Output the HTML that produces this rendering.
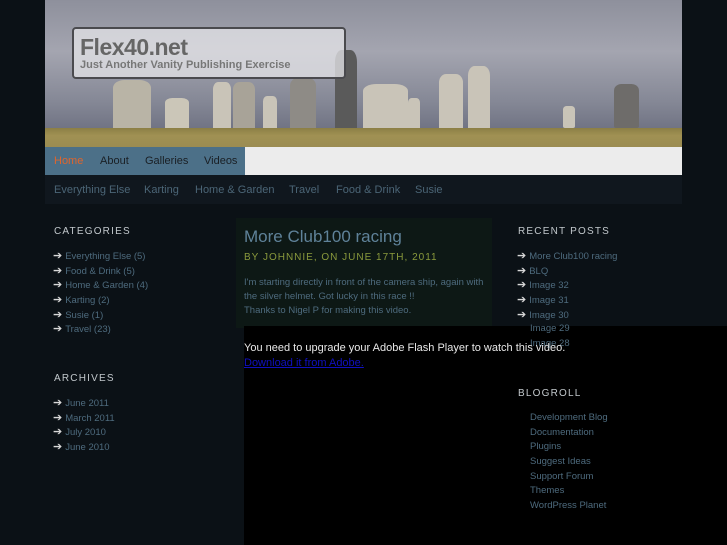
<!DOCTYPE html>
<html><head><style>
*{margin:0;padding:0;box-sizing:border-box}
body{width:727px;height:545px;overflow:hidden;background:#0b1116;font-family:"Liberation Sans",sans-serif;position:relative}
.hdr{position:absolute;left:45px;top:0;width:637px;height:147px;background:linear-gradient(180deg,#8e909c 0%,#a4a5b0 35%,#848795 70%,#717484 87%);overflow:hidden}
.gr{position:absolute;left:0;top:128px;width:637px;height:19px;background:linear-gradient(180deg,#8c7f45,#a09153 40%,#9b8c52)}
.st{position:absolute;background:#c9c4b8;border-radius:30% 30% 2px 2px/15% 15% 2px 2px}
.logo{position:absolute;left:72px;top:27px;width:274px;height:52px;background:rgba(225,225,230,.78);border:2px solid #4a4a4e;border-radius:4px}
.logo h1{position:absolute;left:6px;top:5px;font-size:23px;color:#666;font-weight:bold;letter-spacing:-.5px}
.logo p{position:absolute;left:6px;top:30px;font-size:11px;font-weight:bold;color:#777;letter-spacing:0}
.nav{position:absolute;left:45px;top:147px;width:637px;height:28px;background:#ececec}
.nav .b{position:absolute;left:0;top:0;width:200px;height:28px;background:#4c7088}
.nav span{position:absolute;top:8px;font-size:11px;color:#1a1f24}
.sub{position:absolute;left:45px;top:175px;width:637px;height:29px;background:#10171e}
.sub span{position:absolute;top:9px;font-size:11px;color:#4b6576}
h3{position:absolute;font-size:10px;font-weight:normal;color:#c2c8cc;letter-spacing:1.2px}
ul{position:absolute;list-style:none}
li{font-size:9.5px;color:#4e6b7e;height:14.7px;line-height:14.7px}
li.a:before{content:"➔";color:#d8d8d8;font-size:11px;margin-right:3px;margin-left:-13px}
.post{position:absolute;left:236px;top:218px;width:256px;height:110px;background:#0d1815}
.flash{position:absolute;left:244px;top:326px;width:483px;height:219px;background:#000}
</style></head><body>
<div class="hdr">
<div class="st" style="left:68px;top:80px;width:38px;height:52px;background:#b9b4a6"></div>
<div class="st" style="left:120px;top:98px;width:24px;height:32px;background:#cbc6b8"></div>
<div class="st" style="left:168px;top:82px;width:18px;height:48px"></div>
<div class="st" style="left:188px;top:82px;width:22px;height:48px;background:#a8a398"></div>
<div class="st" style="left:218px;top:96px;width:14px;height:34px"></div>
<div class="st" style="left:245px;top:78px;width:26px;height:52px;background:#8e8b86"></div>
<div class="st" style="left:290px;top:50px;width:22px;height:80px;background:#5a5a5a"></div>
<div class="st" style="left:318px;top:84px;width:45px;height:46px"></div>
<div class="st" style="left:363px;top:98px;width:12px;height:32px"></div>
<div class="st" style="left:394px;top:74px;width:24px;height:56px"></div>
<div class="st" style="left:423px;top:66px;width:22px;height:64px"></div>
<div class="st" style="left:518px;top:106px;width:12px;height:22px"></div>
<div class="st" style="left:569px;top:84px;width:25px;height:44px;background:#6e6c6a"></div>
<div class="gr"></div>
</div>
<div class="logo"><h1>Flex40.net</h1><p>Just Another Vanity Publishing Exercise</p></div>
<div class="nav"><div class="b"></div>
<span style="left:9px;color:#e0652c">Home</span><span style="left:55px">About</span><span style="left:100px">Galleries</span><span style="left:159px">Videos</span></div>
<div class="sub">
<span style="left:9px">Everything Else</span><span style="left:99px">Karting</span><span style="left:150px">Home &amp; Garden</span><span style="left:244px">Travel</span><span style="left:291px">Food &amp; Drink</span><span style="left:370px">Susie</span></div>
<h3 style="left:54px;top:226px">CATEGORIES</h3>
<ul style="left:66px;top:249px"><li class="a">Everything Else (5)</li><li class="a">Food &amp; Drink (5)</li><li class="a">Home &amp; Garden (4)</li><li class="a">Karting (2)</li><li class="a">Susie (1)</li><li class="a">Travel (23)</li></ul>
<h3 style="left:54px;top:373px">ARCHIVES</h3>
<ul style="left:66px;top:396px"><li class="a">June 2011</li><li class="a">March 2011</li><li class="a">July 2010</li><li class="a">June 2010</li></ul>
<div class="post"></div>
<div style="position:absolute;left:244px;top:227px;font-size:17px;color:#5f8299">More Club100 racing</div>
<div style="position:absolute;left:244px;top:252px;font-size:10px;color:#8a9a3c;letter-spacing:1px">BY JOHNNIE, ON JUNE 17TH, 2011</div>
<div style="position:absolute;left:244px;top:276px;font-size:9.5px;color:#4e6b7e;line-height:14px">I'm starting directly in front of the camera ship, again with<br>the silver helmet. Got lucky in this race !!<br>Thanks to Nigel P for making this video.</div>
<h3 style="left:518px;top:226px">RECENT POSTS</h3>
<ul style="left:530px;top:249px"><li class="a">More Club100 racing</li><li class="a">BLQ</li><li class="a">Image 32</li><li class="a">Image 31</li><li class="a">Image 30</li></ul>
<div class="flash"></div>
<ul style="left:530px;top:322px"><li>Image 29</li><li>Image 28</li></ul>
<div style="position:absolute;left:244px;top:341px;font-size:11px;color:#e8e8e8;line-height:15px">You need to upgrade your Adobe Flash Player to watch this video.<br><span style="color:#1010c0;text-decoration:underline">Download it from Adobe.</span></div>
<h3 style="left:518px;top:388px">BLOGROLL</h3>
<ul style="left:530px;top:411px"><li>Development Blog</li><li>Documentation</li><li>Plugins</li><li>Suggest Ideas</li><li>Support Forum</li><li>Themes</li><li>WordPress Planet</li></ul>
</body></html>
